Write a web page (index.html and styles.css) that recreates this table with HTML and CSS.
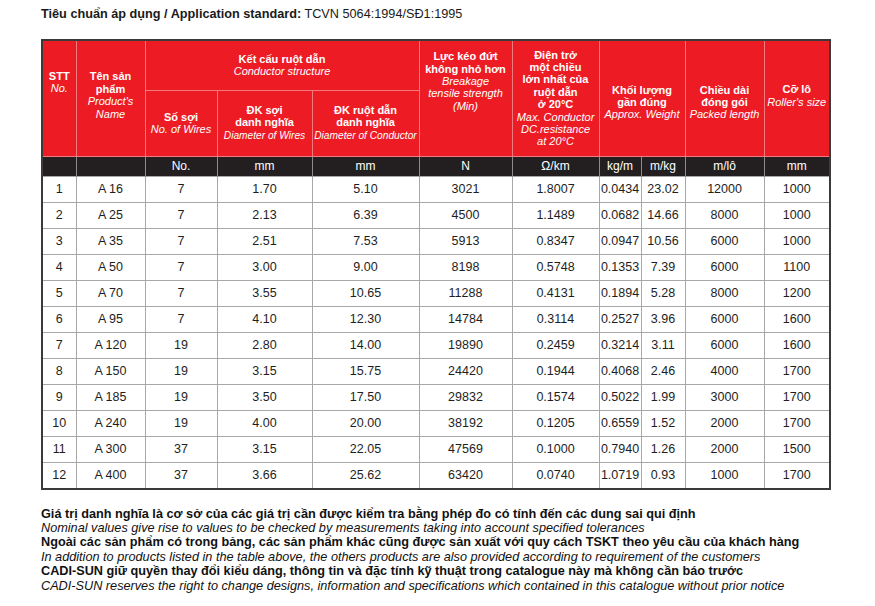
FILE: index.html
```html
<!DOCTYPE html>
<html lang="vi">
<head>
<meta charset="utf-8">
<title>Tiêu chuẩn áp dụng</title>
<link rel="stylesheet" href="styles.css">
</head>
<body>
<div class="page">
  <div class="title"><b>Tiêu chuẩn áp dụng / Application standard:</b> TCVN 5064:1994/SĐ1:1995</div>
  <table class="spec">
    <colgroup>
      <col class="c1"><col class="c2"><col class="c3"><col class="c4"><col class="c5"><col class="c6"><col class="c7"><col class="c8"><col class="c9"><col class="c10"><col class="c11">
    </colgroup>
    <thead>
      <tr class="r1">
        <th rowspan="2" class="h stt">STT<br><span class="en">No.</span></th>
        <th rowspan="2" class="h name">Tên sản<br>phẩm<br><span class="en">Product's<br>Name</span></th>
        <th colspan="3" class="h">Kết cấu ruột dẫn<br><span class="en">Conductor structure</span></th>
        <th rowspan="2" class="h force">Lực kéo đứt<br>không nhỏ hơn<br><span class="en">Breakage<br>tensile strength<br>(Min)</span></th>
        <th rowspan="2" class="h">Điện trở<br>một chiều<br>lớn nhất của<br>ruột dẫn<br>ở 20°C<br><span class="en">Max. Conductor<br>DC.resistance<br>at 20°C</span></th>
        <th rowspan="2" colspan="2" class="h low">Khối lượng<br>gần đúng<br><span class="en">Approx. Weight</span></th>
        <th rowspan="2" class="h low">Chiều dài<br>đóng gói<br><span class="en">Packed length</span></th>
        <th rowspan="2" class="h roller">Cỡ lô<br><span class="en">Roller's size</span></th>
      </tr>
      <tr class="r2">
        <th class="h">Số sợi<br><span class="en">No. of Wires</span></th>
        <th class="h">ĐK sợi<br>danh nghĩa<br><span class="en sq">Diameter of Wires</span></th>
        <th class="h">ĐK ruột dẫn<br>danh nghĩa<br><span class="en sq">Diameter of Conductor</span></th>
      </tr>
      <tr class="units">
        <th></th><th></th><th>No.</th><th>mm</th><th>mm</th><th>N</th><th>Ω/km</th><th>kg/m</th><th>m/kg</th><th>m/lô</th><th>mm</th>
      </tr>
    </thead>
    <tbody>
      <tr><td>1</td><td>A 16</td><td>7</td><td>1.70</td><td>5.10</td><td>3021</td><td>1.8007</td><td>0.0434</td><td>23.02</td><td>12000</td><td>1000</td></tr>
      <tr><td>2</td><td>A 25</td><td>7</td><td>2.13</td><td>6.39</td><td>4500</td><td>1.1489</td><td>0.0682</td><td>14.66</td><td>8000</td><td>1000</td></tr>
      <tr><td>3</td><td>A 35</td><td>7</td><td>2.51</td><td>7.53</td><td>5913</td><td>0.8347</td><td>0.0947</td><td>10.56</td><td>6000</td><td>1000</td></tr>
      <tr><td>4</td><td>A 50</td><td>7</td><td>3.00</td><td>9.00</td><td>8198</td><td>0.5748</td><td>0.1353</td><td>7.39</td><td>6000</td><td>1100</td></tr>
      <tr><td>5</td><td>A 70</td><td>7</td><td>3.55</td><td>10.65</td><td>11288</td><td>0.4131</td><td>0.1894</td><td>5.28</td><td>8000</td><td>1200</td></tr>
      <tr><td>6</td><td>A 95</td><td>7</td><td>4.10</td><td>12.30</td><td>14784</td><td>0.3114</td><td>0.2527</td><td>3.96</td><td>6000</td><td>1600</td></tr>
      <tr><td>7</td><td>A 120</td><td>19</td><td>2.80</td><td>14.00</td><td>19890</td><td>0.2459</td><td>0.3214</td><td>3.11</td><td>6000</td><td>1600</td></tr>
      <tr><td>8</td><td>A 150</td><td>19</td><td>3.15</td><td>15.75</td><td>24420</td><td>0.1944</td><td>0.4068</td><td>2.46</td><td>4000</td><td>1700</td></tr>
      <tr><td>9</td><td>A 185</td><td>19</td><td>3.50</td><td>17.50</td><td>29832</td><td>0.1574</td><td>0.5022</td><td>1.99</td><td>3000</td><td>1700</td></tr>
      <tr><td>10</td><td>A 240</td><td>19</td><td>4.00</td><td>20.00</td><td>38192</td><td>0.1205</td><td>0.6559</td><td>1.52</td><td>2000</td><td>1700</td></tr>
      <tr><td>11</td><td>A 300</td><td>37</td><td>3.15</td><td>22.05</td><td>47569</td><td>0.1000</td><td>0.7940</td><td>1.26</td><td>2000</td><td>1500</td></tr>
      <tr><td>12</td><td>A 400</td><td>37</td><td>3.66</td><td>25.62</td><td>63420</td><td>0.0740</td><td>1.0719</td><td>0.93</td><td>1000</td><td>1700</td></tr>
    </tbody>
  </table>
  <div class="notes">
    <p class="vi">Giá trị danh nghĩa là cơ sở của các giá trị cần được kiểm tra bằng phép đo có tính đến các dung sai qui định</p>
    <p class="en-note">Nominal values give rise to values to be checked by measurements taking into account specified tolerances</p>
    <p class="vi">Ngoài các sản phẩm có trong bảng, các sản phẩm khác cũng được sản xuất với quy cách TSKT theo yêu cầu của khách hàng</p>
    <p class="en-note">In addition to products listed in the table above, the others products are also provided according to requirement of the customers</p>
    <p class="vi">CADI-SUN giữ quyền thay đổi kiểu dáng, thông tin và đặc tính kỹ thuật trong catalogue này mà không cần báo trước</p>
    <p class="en-note">CADI-SUN reserves the right to change designs, information and specifications which contained in this catalogue without prior notice</p>
  </div>
</div>
</body>
</html>
```

FILE: styles.css
```css
body {
  margin: 0;
  background: #ffffff;
  font-family: "Liberation Sans", Arial, sans-serif;
  color: #1a1a1a;
}

.page {
  padding-left: 41px;
}

.title {
  padding-top: 6px;
  font-size: 12.7px;
  line-height: 16px;
  color: #1a1a1a;
}

.spec {
  margin-top: 17px;
  width: 788px;
  table-layout: fixed;
  border-collapse: collapse;
  border: 2px solid #3a3a3a;
}

.c1 { width: 34px; }
.c2 { width: 69px; }
.c3 { width: 72px; }
.c4 { width: 95px; }
.c5 { width: 107px; }
.c6 { width: 93px; }
.c7 { width: 87px; }
.c8 { width: 42px; }
.c9 { width: 44px; }
.c10 { width: 79px; }
.c11 { width: 66px; }

.h {
  background: #ed1c24;
  color: #ffffff;
  font-size: 11px;
  line-height: 12.4px;
  font-weight: bold;
  padding: 0 1px;
  vertical-align: middle;
  text-align: center;
  border: 1px solid #f07a7e;
}

.h .en {
  font-style: italic;
  font-weight: normal;
}

.h .sq {
  font-size: 10.2px;
  white-space: nowrap;
}

.r1 { height: 50px; }
.r2 { height: 66px; }

.stt { padding-bottom: 32px; }
.name { padding-bottom: 6px; }
.force { padding-bottom: 34px; }
.low { padding-top: 8px; }
.roller { padding-bottom: 5px; }

.units th {
  height: 19px;
  padding: 0;
  background: #231f20;
  color: #ffffff;
  font-size: 12px;
  font-weight: normal;
  text-align: center;
  border-left: 1px solid #8c8c8c;
  border-right: 1px solid #8c8c8c;
}

.spec td {
  height: 25px;
  padding: 0;
  text-align: center;
  font-size: 12.5px;
  color: #1e1e1e;
  border: 1px solid #a8a8a8;
}

.notes {
  margin-top: 17px;
}

.notes p {
  margin: 0;
  font-size: 12.7px;
  line-height: 14.4px;
  color: #111111;
}

.notes .vi {
  font-weight: bold;
}

.notes .en-note {
  font-style: italic;
}
```
